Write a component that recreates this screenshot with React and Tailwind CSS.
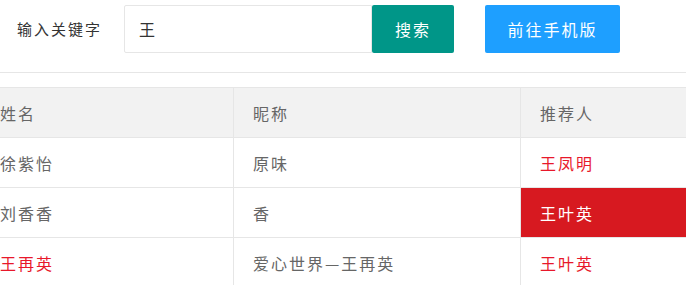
import React from 'react';

const rows = [
  { name: '徐紫怡', nick: '原味', ref: '王凤明' },
  { name: '刘香香', nick: '香', ref: '王叶英', hot: true },
  { name: '王再英', nick: '爱心世界—王再英', ref: '王叶英', redName: true },
];

function App() {
  return (
    <div
      className="w-[686px] h-[285px] overflow-hidden bg-white text-[#666]"
      style={{ fontFamily: '"Microsoft YaHei", "Noto Sans CJK SC", sans-serif' }}
    >
      {/* 搜索栏 */}
      <div className="flex items-center pt-[5px] h-[53px]">
        <span className="ml-[17px] w-[107px] text-[15px] tracking-[2px] text-[#333]">输入关键字</span>
        <input
          readOnly
          value="王"
          className="h-[48px] w-[248px] border border-[#e6e6e6] rounded-l-[2px] px-[14px] text-[16px] text-[#333] outline-none"
        />
        <button className="h-[48px] w-[82px] bg-[#009688] rounded-[2px] text-white text-[16px] tracking-[2px]">
          搜索
        </button>
        <button className="ml-[31px] h-[48px] w-[135px] bg-[#1E9FFF] rounded-[2px] text-white text-[16px] tracking-[2px]">
          前往手机版
        </button>
      </div>

      <div className="mt-[19px] h-px bg-[#e6e6e6]" />

      {/* 表格 */}
      <div className="mt-[14px] w-[686px] overflow-hidden">
        <table className="table-fixed w-[840px] min-w-[840px] -ml-[20px] border-collapse text-[16px] tracking-[2px]">
          <colgroup>
            <col className="w-[253px]" />
            <col className="w-[287px]" />
            <col className="w-[300px]" />
          </colgroup>
          <thead>
            <tr className="bg-[#f2f2f2] h-[50px]">
              <th className="border border-[#e6e6e6] px-[19px] text-left font-normal">姓名</th>
              <th className="border border-[#e6e6e6] px-[19px] text-left font-normal">昵称</th>
              <th className="border border-[#e6e6e6] px-[19px] text-left font-normal">推荐人</th>
            </tr>
          </thead>
          <tbody>
            {rows.map((r) => (
              <tr key={r.name} className="h-[50px]">
                <td className={`border border-[#e6e6e6] px-[19px] ${r.redName ? 'text-[#e8182b]' : ''}`}>{r.name}</td>
                <td className="border border-[#e6e6e6] px-[19px]">{r.nick}</td>
                <td
                  className={`border border-[#e6e6e6] px-[19px] ${r.hot ? 'bg-[#d71920] text-white' : 'text-[#e8182b]'}`}
                >
                  {r.ref}
                </td>
              </tr>
            ))}
          </tbody>
        </table>
      </div>
    </div>
  );
}

export default App;
